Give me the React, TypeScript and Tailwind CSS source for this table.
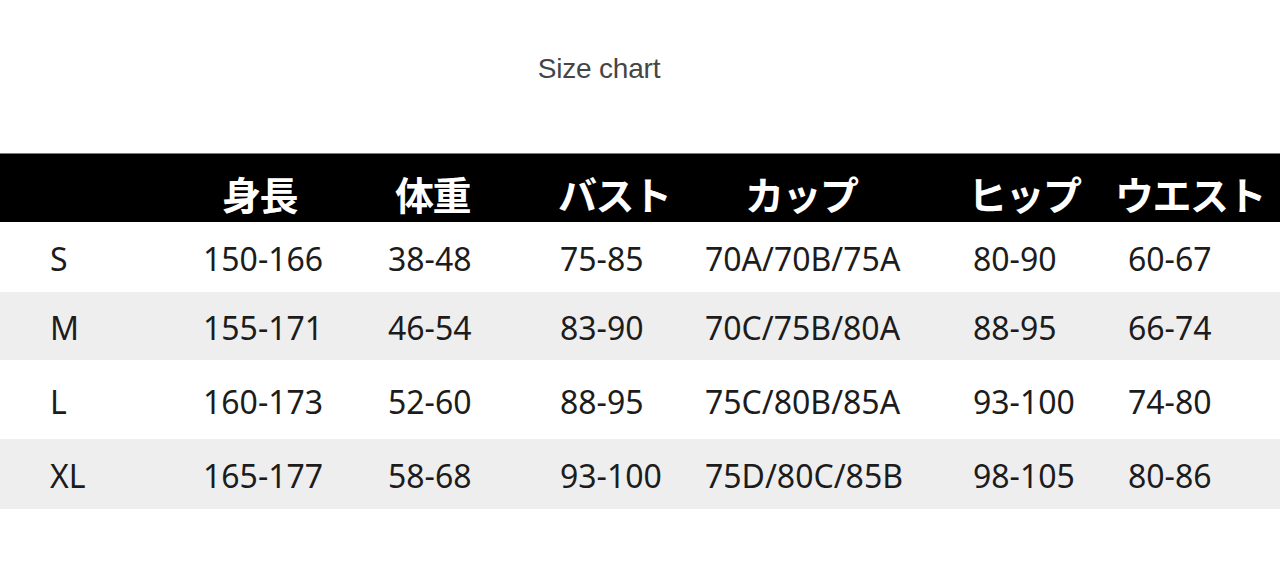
const headers = ["身長", "体重", "バスト", "カップ", "ヒップ", "ウエスト"];

const rows = [
  { size: "S", cells: ["150-166", "38-48", "75-85", "70A/70B/75A", "80-90", "60-67"], tone: "bg-white", h: "h-[70px]" },
  { size: "M", cells: ["155-171", "46-54", "83-90", "70C/75B/80A", "88-95", "66-74"], tone: "bg-[#efeeef]", h: "h-[68px]" },
  { size: "L", cells: ["160-173", "52-60", "88-95", "75C/80B/85A", "93-100", "74-80"], tone: "bg-white", h: "h-[79px]" },
  { size: "XL", cells: ["165-177", "58-68", "93-100", "75D/80C/85B", "98-105", "80-86"], tone: "bg-[#efeeef]", h: "h-[70px]" },
];

export default function App() {
  return (
    <div className="w-[1280px] h-[586px] bg-white overflow-hidden">
      {/* Title */}
      <div className="h-[153px] flex justify-center pt-[55px] pr-[82px]">
        <h1
          className="text-[28px] leading-none text-[#454545] tracking-[-0.2px]"
          style={{ fontFamily: '"Liberation Sans", Arial, sans-serif' }}
        >
          Size chart
        </h1>
      </div>

      {/* Header bar */}
      <div
        className="h-[69px] bg-black border-t border-[#7a7a7a] grid grid-cols-[222px_173px_163px_187px_223px_147px_1fr] items-center pt-[10px] text-white text-[39px] font-semibold leading-none"
        style={{ fontFamily: '"Noto Sans CJK JP", "Noto Sans", sans-serif' }}
      >
        <span />
        {headers.map((h) => (
          <span key={h} className="tracking-[-1.5px]">
            {h}
          </span>
        ))}
      </div>

      {/* Rows */}
      <div
        className="text-[32px] leading-none text-[#1c1c1c]"
        style={{ fontFamily: '"Noto Sans", "Open Sans", sans-serif' }}
      >
        {rows.map((r) => (
          <div
            key={r.size}
            className={`${r.tone} ${r.h} grid grid-cols-[153px_185px_172px_145px_268px_155px_1fr] items-center pl-[50px] pt-[4px]`}
          >
            <span>{r.size}</span>
            {r.cells.map((c, i) => (
              <span key={i}>{c}</span>
            ))}
          </div>
        ))}
      </div>
    </div>
  );
}
